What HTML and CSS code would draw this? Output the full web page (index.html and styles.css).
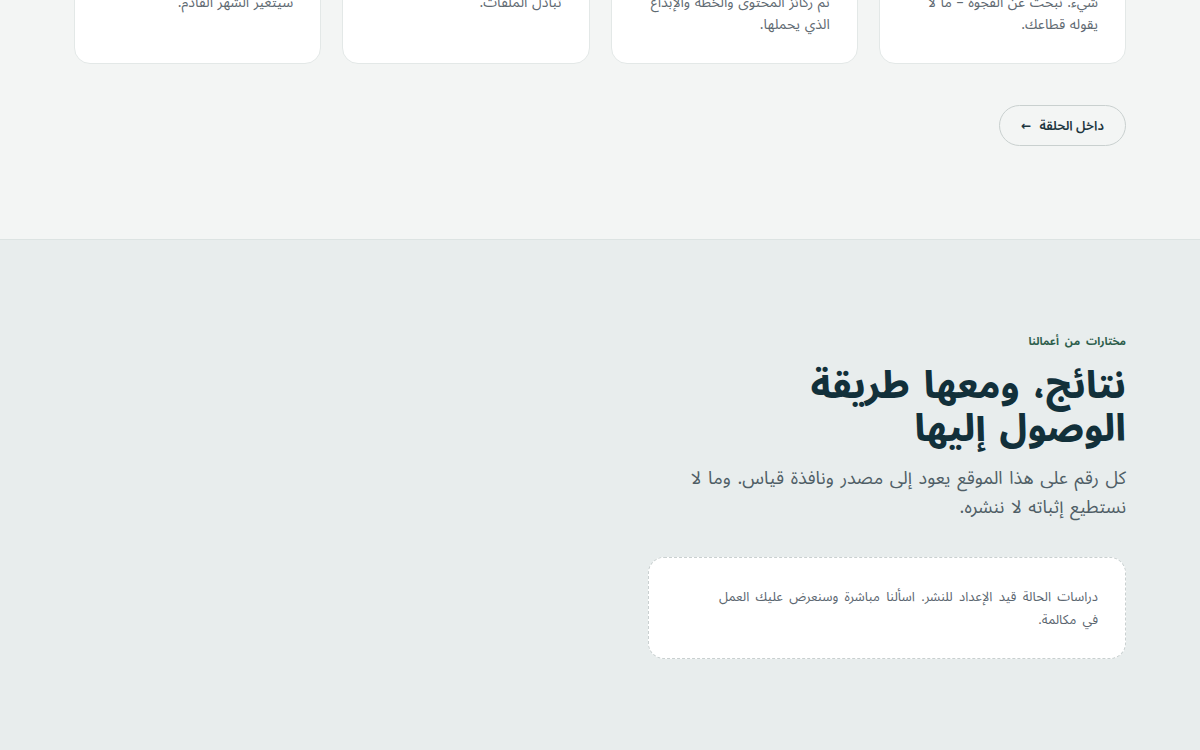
FILE: index.html
```html
<!DOCTYPE html>
<html lang="ar" dir="rtl">
<head>
<meta charset="utf-8">
<title>نتائج</title>
<link rel="stylesheet" href="styles.css">
</head>
<body>
<div class="page">
  <section class="loop">
    <div class="container">
      <div class="cards">
        <article class="card">
          <h3 class="card-title">البحث</h3>
          <p class="card-text">قبل أن نكتب حرفًا واحدًا،<br>نستمع قبل أن نقول أي<br>شيء. نبحث عن الفجوة – ما لا<br>يقوله قطاعك.</p>
        </article>
        <article class="card">
          <h3 class="card-title">الاستراتيجية</h3>
          <p class="card-text">نبني الاستراتيجية على ما<br>نحدد الموقع أولًا،<br>ثم ركائز المحتوى والخطة والإبداع<br>الذي يحملها.</p>
        </article>
        <article class="card">
          <h3 class="card-title">التنفيذ</h3>
          <p class="card-text">فريق واحد ينتج وينشر ويدير<br>دون تعدد الوسطاء أو فوضى<br>تبادل الملفات.</p>
        </article>
        <article class="card">
          <h3 class="card-title">القياس</h3>
          <p class="card-text">تقارير شهرية واضحة تخبرك<br>بما نجح وما لم ينجح وما<br>سيتغير الشهر القادم.</p>
        </article>
      </div>
      <div class="actions">
        <a class="btn-outline" href="#">داخل الحلقة <span class="arrow">←</span></a>
      </div>
    </div>
  </section>

  <section class="work">
    <div class="container work-grid">
      <div class="work-intro">
        <p class="eyebrow">مختارات من أعمالنا</p>
        <h2 class="work-title">نتائج، ومعها طريقة<br>الوصول إليها</h2>
        <p class="work-lead">كل رقم على هذا الموقع يعود إلى مصدر ونافذة قياس. وما لا نستطيع إثباته لا ننشره.</p>
        <div class="note">
          <p>دراسات الحالة قيد الإعداد للنشر. اسألنا مباشرة وسنعرض عليك العمل في مكالمة.</p>
        </div>
      </div>
      <div class="work-side"></div>
    </div>
  </section>
</div>
</body>
</html>
```

FILE: styles.css
```css
* { box-sizing: border-box; }
html, body { margin: 0; padding: 0; }
body {
  font-family: "Noto Sans Arabic", "Noto Kufi Arabic", "DejaVu Sans", sans-serif;
  background: #e8eded;
  color: #5b6670;
  overflow: hidden;
}
.page { margin-top: -157px; }
.container {
  width: 1052px;
  margin: 0 auto;
}
.loop {
  background: #f3f5f4;
  border-bottom: 1px solid #dce3e2;
  padding: 40px 0 93px;
}
.cards {
  display: grid;
  grid-template-columns: repeat(4, 1fr);
  gap: 21px;
}
.card {
  background: #ffffff;
  border: 1px solid #e3e8e7;
  border-radius: 16px;
  padding: 28px 27px 27px;
}
.card-title {
  margin: 0 0 10px;
  font-size: 17px;
  line-height: 26px;
  color: #12303a;
}
.card-text {
  margin: 0;
  font-size: 14px;
  line-height: 22px;
  word-spacing: 1px;
  white-space: nowrap;
  color: #5f6a72;
}
.actions {
  display: flex;
  justify-content: flex-start;
  margin-top: 41px;
}
.btn-outline {
  display: inline-flex;
  align-items: center;
  gap: 8px;
  height: 41px;
  padding: 0 21px;
  border: 1px solid #c9d0cf;
  border-radius: 999px;
  font-size: 13px;
  font-weight: 600;
  color: #1d3640;
  text-decoration: none;
}
.arrow { font-size: 12px; font-family: "DejaVu Sans", sans-serif; }

.work {
  background: #e8eded;
  padding: 90px 0 100px;
}
.work-grid {
  display: grid;
  grid-template-columns: 478px 1fr;
  gap: 96px;
}
.eyebrow {
  margin: 0 0 12px;
  font-size: 11px;
  font-weight: 700;
  color: #2d5e4c;
  word-spacing: 3px;
}
.work-title {
  margin: 0 0 13px;
  font-size: 37px;
  line-height: 43px;
  font-weight: 800;
  word-spacing: 4px;
  color: #12303a;
}
.work-lead {
  margin: 0 0 35px;
  max-width: 445px;
  font-size: 18px;
  line-height: 29px;
  word-spacing: 2px;
  color: #4f5e66;
}
.note {
  background: #ffffff;
  border: 1px dashed #c9d0d0;
  border-radius: 16px;
  padding: 28px 27px 26px;
}
.note p {
  margin: 0;
  max-width: 392px;
  font-size: 13px;
  line-height: 23px;
  word-spacing: 3px;
  color: #5b6670;
}
```
